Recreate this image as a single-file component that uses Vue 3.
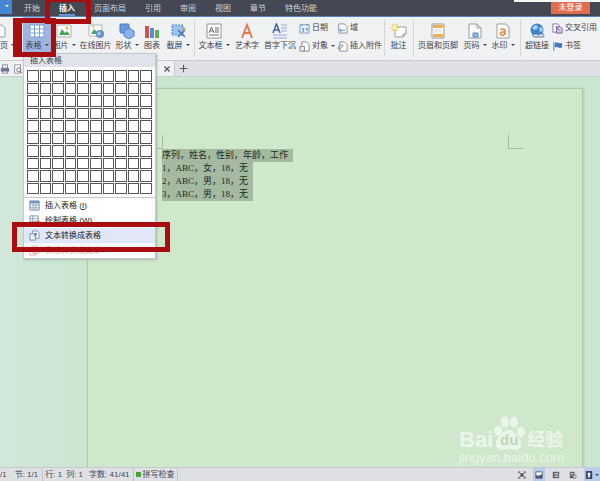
<script setup>
const tabs = ['开始', '插入', '页面布局', '引用', '审阅', '视图', '章节', '特色功能']
const lines = ['序列，姓名，性别，年龄，工作', '1，ABC，女，18，无', '2，ABC，男，18，无', '3，ABC，男，18，无']
</script>

<template>
  <div class="app">
    <header class="titlebar">
      <button class="appmenu" aria-label="菜单"><i class="caret"></i></button>
      <nav class="tabs">
        <button v-for="t in tabs" :key="t" :class="{ active: t === '插入' }">{{ t }}</button>
      </nav>
      <div class="account"><button class="login">未登录</button></div>
    </header>

    <div class="ribbon">
      <button class="tool cut">
        <svg viewBox="0 0 16 16"><path d="M-4 2H2l3 3v9H-4z" fill="#fff" stroke="#9a9da3" /></svg>
        <span>页<i class="caret"></i></span>
      </button>
      <button class="tool selected">
        <svg viewBox="0 0 16 16"><path d="M1 2h14v12H1z" fill="#fff" stroke="#7f9fd4" /><path d="M1 6h14M1 10h14M5.500 2v12M10.500 2v12" stroke="#7f9fd4" fill="none" /></svg>
        <span>表格<i class="caret"></i></span>
      </button>
      <button class="tool">
        <svg viewBox="0 0 16 16"><path d="M1 2h14v12H1z" fill="#fff" stroke="#aeb1b5" /><path d="M3 12l3-6 3 4 2-2 3 4z" fill="#4ba454" /><circle cx="11" cy="5" r="1.500" fill="#eab054" /></svg>
        <span>图片<i class="caret"></i></span>
      </button>
      <button class="tool">
        <svg viewBox="0 0 16 16"><path d="M1 2h13v11H1z" fill="#fff" stroke="#aeb1b5" /><path d="M3 11l3-5 3 3 2-1v3z" fill="#4ba454" /><circle cx="5" cy="4" r="1" fill="#eab054" /><circle cx="12" cy="11" r="4" fill="#5e91ca" /><path d="M9 10l3-2 1 3-2 2" fill="#a5cbe7" /></svg>
        <span>在线图片</span>
      </button>
      <button class="tool">
        <svg viewBox="0 0 16 16"><rect x="1" y="1" width="9" height="9" rx="1" fill="#6d9bdd" stroke="#4579bd" /><path d="M10 5l5 3v5l-5 3-5-3V8z" fill="#8ab2ec" stroke="#4d82ca" /></svg>
        <span>形状<i class="caret"></i></span>
      </button>
      <button class="tool">
        <svg viewBox="0 0 16 16"><path d="M1 3h4v12H1z" fill="#d4524c" /><path d="M6 5h4v10H6z" fill="#5b8bd3" /><path d="M11 7h4v8h-4z" fill="#62ad5a" /></svg>
        <span>图表</span>
      </button>
      <button class="tool">
        <svg viewBox="0 0 16 16"><path d="M2 2h11v10H2z" fill="#9dc3ed" stroke="#4f84c4" stroke-dasharray="2 1" /><path d="M8 7l7 7M15 7l-7 7" stroke="#4374b5" stroke-width="1.500" /><circle cx="14" cy="6" r="1.500" fill="#e0a054" /></svg>
        <span>截屏<i class="caret"></i></span>
      </button>
      <i class="rule"></i>
      <button class="tool">
        <svg viewBox="0 0 16 16"><path d="M1 1h14v14H1z" fill="#fff" stroke="#8f9297" /><path d="M3 10l2.500-6L8 10M4 8h3M9 5h4M9 7h4M9 9h4M3 12h10" fill="none" stroke="#666a70" /></svg>
        <span>文本框<i class="caret"></i></span>
      </button>
      <button class="tool">
        <svg viewBox="0 0 16 16"><path d="M3 15L8 2l5 13M5 10h6" fill="none" stroke="#e07b50" stroke-width="2" /></svg>
        <span>艺术字</span>
      </button>
      <button class="tool">
        <svg viewBox="0 0 16 16"><path d="M1 10l3.500-9L8 10M2 7h5" fill="none" stroke="#3f62a4" stroke-width="1.500" /><path d="M9 2h6M9 5h6M9 8h6M1 12h14M1 15h14" stroke="#8dabd9" /></svg>
        <span>首字下沉</span>
      </button>
      <div class="stack">
        <button>
          <svg viewBox="0 0 12 12"><path d="M1 2h10v9H1z" fill="#eaf2fb" stroke="#7798c4" /><path d="M3 1v2M9 1v2M3 6h2v3H3M7 6h2v3" fill="none" stroke="#5581bc" /></svg>日期
        </button>
        <button>
          <svg viewBox="0 0 12 12"><path d="M3 1h5l3 3v7H3z" fill="#fff" stroke="#83878e" /><path d="M1 6h5v5H1z" fill="#e9edf2" stroke="#83878e" /></svg>对象<i class="caret"></i>
        </button>
      </div>
      <div class="stack">
        <button>
          <svg viewBox="0 0 12 12"><path d="M2 1h6l3 3v7H2z" fill="#fff" stroke="#858c9a" /><path d="M3 8h6M4 6l-1 2 2 2" fill="none" stroke="#5984bd" /></svg>域
        </button>
        <button>
          <svg viewBox="0 0 12 12"><path d="M3 1h5l3 3v7H3z" fill="#fff" stroke="#858c9a" /><path d="M6 6L3 9q-3 0-1-3l3-2q3 0 0 3" fill="none" stroke="#777c84" /></svg>插入附件
        </button>
      </div>
      <i class="rule"></i>
      <button class="tool">
        <svg viewBox="0 0 16 16"><path d="M4 4h11v7l-3 3H4z" fill="#fff" stroke="#9a9da3" /><path d="M15 11h-3v3" fill="none" stroke="#9a9da3" /><path d="M4 0v9M0 4.500h9M1 1l6 7M7 1L1 8" stroke="#e7c438" /><circle cx="4" cy="4.500" r="2" fill="#fff6a4" /></svg>
        <span>批注</span>
      </button>
      <i class="rule"></i>
      <button class="tool">
        <svg viewBox="0 0 16 16"><path d="M2 1h12v14H2z" fill="#fff" stroke="#96999e" /><path d="M3 2h10v3H3zM3 11h10v3H3z" fill="#edae54" /><path d="M4 7h8M4 9h8" stroke="#d3d6da" /></svg>
        <span>页眉和页脚</span>
      </button>
      <button class="tool">
        <svg viewBox="0 0 16 16"><path d="M2 1h8l4 4v10H2z" fill="#fff" stroke="#96999e" /><path d="M10 1v4h4" fill="none" stroke="#96999e" /><path d="M6 10h5v4H6z" fill="#93baf0" stroke="#5986c2" /></svg>
        <span>页码<i class="caret"></i></span>
      </button>
      <button class="tool">
        <svg viewBox="0 0 16 16"><path d="M2 1h9l3 3v11H2z" fill="#fff" stroke="#96999e" /><path d="M5 7q3-2 5 0v5M10 9H7q-3 1-1 3 3 1 4-2" fill="none" stroke="#e38a45" stroke-width="1.500" /></svg>
        <span>水印<i class="caret"></i></span>
      </button>
      <i class="rule"></i>
      <button class="tool">
        <svg viewBox="0 0 16 16"><circle cx="8" cy="7" r="6.500" fill="#3e83cd" /><path d="M3 5l3-3 3 1-1 3-3 1zM10 5l3-1 1 4-3 1z" fill="#a8d2ef" /><rect x="4" y="11" width="6" height="3" rx="1.500" fill="#e7edf4" stroke="#506f96" /><rect x="9" y="11" width="6" height="3" rx="1.500" fill="#e7edf4" stroke="#506f96" /></svg>
        <span>超链接</span>
      </button>
      <div class="stack">
        <button>
          <svg viewBox="0 0 12 12"><path d="M1 1h5l2 2v7H1z" fill="#fff" stroke="#786d9b" /><path d="M5 4h4l2 2v5H5z" fill="#d5c9ea" stroke="#77569e" /><path d="M4 4l4 4" stroke="#654b8d" /></svg>交叉引用
        </button>
        <button>
          <svg viewBox="0 0 12 12"><path d="M2 1v10" stroke="#54779f" /><path d="M3 2q3-1 4 0 2 1 4 0v5q-3 1-4 0-2-1-4 0z" fill="#4677cc" /></svg>书签
        </button>
      </div>
    </div>

    <div class="docbar">
      <div class="doctab">
        <button aria-label="打印"><svg viewBox="0 0 12 12"><path d="M3 1h6v4H3zM3 8h6v3H3z" fill="#fff" stroke="#66758c" /><path d="M1 5h10v4H1z" fill="#66758c" /></svg></button>
        <button aria-label="打印预览"><svg viewBox="0 0 12 12"><path d="M2 1h7v10H2z" fill="#fff" stroke="#80838a" /><circle cx="7" cy="7" r="2.500" fill="#eef" stroke="#60666f" /><path d="M9 9l2 2" stroke="#60666f" /></svg></button>
        <button class="close" aria-label="关闭"><svg viewBox="0 0 12 12"><path d="M3 3l6 6M9 3l-6 6" stroke="#555961" stroke-width="1.500" /></svg></button>
      </div>
      <button class="add" aria-label="新建"><svg viewBox="0 0 12 12"><path d="M6 1v10M1 6h10" stroke="#555b65" stroke-width="1.500" /></svg></button>
    </div>

    <main class="workspace">
      <article class="page">
        <div class="corners"><i class="corner left"></i><i class="corner right"></i></div>
        <div class="text"><p v-for="l in lines" :key="l"><mark>{{ l }}</mark></p></div>
        <div class="brand">
          <div class="brandrow">
            <b>Bai</b>
            <span class="paw">
              <svg viewBox="0 0 32 36"><g fill="currentColor"><ellipse cx="5" cy="15" rx="4" ry="5" /><ellipse cx="12" cy="6" rx="4" ry="5.500" /><ellipse cx="21" cy="6" rx="4" ry="5.500" /><ellipse cx="28" cy="16" rx="4" ry="5" /><path d="M16 14c5 0 6 5 10 8 4 4 3 12-4 12-3 0-4-1-6-1s-4 1-7 1c-6 0-8-7-4-12 4-4 6-8 11-8z" /></g></svg>
              <em>du</em>
            </span>
            <b class="cn">经验</b>
          </div>
          <div class="site">jingyan.baidu.com</div>
        </div>
      </article>
    </main>

    <footer class="status">
      <span class="pageno">/1</span><span class="section">节: 1/1</span><i></i>
      <span class="row">行: 1</span><span class="col">列: 1</span><span class="words">字数: 41/41</span><i></i>
      <button class="spell"><b></b>拼写检查</button><i></i>
      <div class="views">
        <button aria-label="全屏显示"><svg viewBox="0 0 10 10"><path d="M3 3h4v4H3z" fill="#555a62" /><path d="M1 3V1h2M7 1h2v2M9 7v2H7M3 9H1V7M1 1l8 8M9 1L1 9" fill="none" stroke="#555a62" /></svg></button>
        <button class="on" aria-label="页面视图"><svg viewBox="0 0 10 10"><path d="M1 1h8v8H1z" fill="#f5f7fa" stroke="#4d5a70" /><path d="M1 5l3 1 5-2v5H1z" fill="#4d5a70" /></svg></button>
        <button aria-label="大纲"><svg viewBox="0 0 10 10"><path d="M1 1h8v8H1z" fill="#5a5d63" /><path d="M3 3h5M3 5h5M3 7h5" stroke="#e5e7eb" /></svg></button>
        <button aria-label="网页版式"><svg viewBox="0 0 10 10"><path d="M1 1h6v8H1z" fill="#5a5d63" /><path d="M2 3h4M2 5h3" stroke="#e5e7eb" /><circle cx="7" cy="7" r="2" fill="#eee" stroke="#5a5d63" /></svg></button>
        <button class="on last" aria-label="护眼模式"><svg viewBox="0 0 10 10"><path d="M1 0h8v10H1z" fill="#414b5c" /><path d="M5 2q3 1 1 4v2H4V6Q2 3 5 2z" fill="#fff" /></svg><i class="caret"></i></button>
      </div>
    </footer>

    <section class="menu">
      <h2>插入表格</h2>
      <div class="cells"><i v-for="n in 100" :key="n"></i></div>
      <button>
        <svg viewBox="0 0 12 12"><path d="M1 1h10v10H1z" fill="#fff" stroke="#6b84ad" /><path d="M1 2.500h10" stroke="#5c7eb6" stroke-width="2" /><path d="M1 5.500h10M1 8.500h10M4.500 1v10M7.500 1v10" stroke="#8ba0c2" /></svg>插入表格&nbsp;(<u>I</u>)
      </button>
      <button>
        <svg viewBox="0 0 12 12"><path d="M1 1h9v10H1z" fill="#fff" stroke="#7b90b3" /><path d="M1 4h9M1 7h9M4 1v10" stroke="#8ba0c2" /><path d="M5 10l5-5 2 2-5 4z" fill="#e48242" /></svg>绘制表格&nbsp;(<u>W</u>)
      </button>
      <button class="current">
        <svg viewBox="0 0 12 12"><path d="M4 1h5l2 2v6H4z" fill="#fff" stroke="#7888a8" /><path d="M1 4h6v7H1z" fill="#eef2fc" stroke="#7888a8" /><path d="M5 7l3-3M6 4h2v2" fill="none" stroke="#4b6da6" /></svg>文本转换成表格
      </button>
      <button class="disabled" disabled>
        <svg viewBox="0 0 12 12"><path d="M4 1h5l2 2v6H4zM1 4h6v7H1z" fill="#fff" stroke="#e5a7a7" /></svg>表格转换成文本
      </button>
    </section>

    <i class="frame frame-tab"></i>
    <i class="frame frame-table"></i>
    <i class="frame frame-convert"></i>
  </div>
</template>

<style>
body { margin: 0; }
</style>

<style scoped>
* { box-sizing: border-box; }
.app {
  position: relative;
  display: grid;
  grid-template-rows: 17px 44px 16px 1fr 14px;
  min-height: 100vh;
  overflow: hidden;
  font: 8px/10px "Liberation Sans", "Noto Sans CJK SC", sans-serif;
  color: #3f4247;
}
button { margin: 0; padding: 0; border: 0; background: none; font: inherit; color: inherit; white-space: nowrap; }
svg { display: block; flex: none; }
.caret { display: inline-block; border: 2px solid transparent; border-top-color: currentColor; border-bottom: 0; margin-left: 3px; vertical-align: 2px; }

.titlebar { display: flex; background: #434853; border-bottom: 1px solid #5683b8; color: #d0d3d9; }
.appmenu { width: 12px; height: 14px; background: #4486d2; color: #fff; }
.appmenu .caret { margin-left: 2px; }
.tabs { display: flex; flex: 1; gap: 19px; padding-left: 12px; }
.tabs button { height: 16px; padding-top: 1px; }
.tabs .active { color: #fff; font-weight: bold; border-bottom: 2px solid #6795cc; padding-top: 3px; }
.account { width: 86px; height: 3px; border-top: 2px solid #f4f6f8; padding-left: 37px; }
.login { display: block; width: 39px; height: 12px; background: #e16c50; color: #fff; }

.ribbon {
  display: grid;
  grid-template-columns: 23px 28px 26px 37px 26px 24px 28px 4px 36px 30px 36px 38px 46px 4px 25px 4px 46px 28px 28px 6px 28px 1fr;
  background: #f0f1f3;
  border-bottom: 1px solid #c9cbd0;
}
.tool { display: flex; flex-direction: column; align-items: center; gap: 2px; padding-top: 6px; }
.tool svg { width: 16px; height: 16px; }
.tool.cut { align-items: flex-start; }
.selected { height: 38px; background: #9fb5df; }
.rule { height: 37px; margin-top: 3px; justify-self: center; border-left: 1px solid #d3d5d9; }
.stack { display: flex; flex-direction: column; gap: 8px; padding: 6px 0 0 1px; }
.stack button { display: flex; align-items: center; gap: 2px; height: 10px; }
.stack svg { width: 11px; height: 11px; }
.stack .caret { margin-left: 1px; }

.docbar { display: flex; background: #dfe0e5; border-bottom: 1px solid #c5d3cb; }
.doctab { display: flex; align-items: center; gap: 3px; width: 175px; background: #f0f1f4; border-right: 1px solid #c9cbd0; }
.doctab svg { width: 10px; height: 10px; }
.doctab .close { margin: 0 2px 0 auto; }
.add { padding: 0 4px; }
.add svg { width: 9px; height: 9px; }

.workspace { display: flex; padding: 11px 17px 0 87px; background: linear-gradient(90deg, #d1e7d9, #cbe6d0 16%, #c9e6d1); }
.page { display: flex; flex: 1; flex-direction: column; background: #cfe8cb; border: 1px solid #afc8b1; border-bottom: 0; box-shadow: 1px 0 2px #b5cdb8; }
.corners { display: flex; justify-content: space-between; padding: 46px 59px 0 60px; }
.corner { width: 15px; height: 14px; border-bottom: 1px solid #a5bca3; }
.left { border-right: 1px solid #a5bca3; }
.right { border-left: 1px solid #a5bca3; }
.text { padding-left: 74px; font: 9px/13px "Liberation Serif", "Noto Sans CJK SC", serif; color: #222c22; }
.text p { margin: 0; height: 13px; display: flex; }
.text mark { background: #a3b9a0; color: inherit; padding-right: 5px; }
.brand { margin: auto 16px 2px auto; width: 107px; color: #ebf6ea; font-family: "Liberation Sans", "Noto Sans CJK SC", sans-serif; }
.brandrow { display: flex; align-items: flex-end; height: 35px; font-size: 22px; line-height: 22px; }
.brandrow .cn { font-size: 18px; font-weight: bold; margin-left: 2px; }
.paw { position: relative; width: 32px; height: 35px; }
.paw svg { width: 32px; height: 36px; }
.paw em { position: absolute; inset: 16px 0 0; text-align: center; font-size: 15px; line-height: 16px; font-style: normal; font-weight: bold; color: #b9d8b6; }
.site { font-size: 13px; line-height: 14px; }

.status { display: flex; align-items: center; background: #dfe0e4; border-top: 1px solid #c6c9cd; color: #44474c; }
.status > i { height: 12px; border-left: 1px solid #bfc1c6; }
.section { margin: 0 4px 0 8px; }
.row { margin-left: 2px; }
.col { margin-left: 4px; }
.words { margin: 0 3px 0 6px; }
.spell { display: flex; align-items: center; gap: 2px; padding: 0 2px; }
.spell b { width: 5px; height: 5px; background: #4aa23c; }
.views { display: flex; align-self: stretch; gap: 5px; margin-left: auto; }
.views button { display: flex; align-items: center; justify-content: center; width: 12px; }
.views svg { width: 8px; height: 8px; }
.views .on { background: #b7cbed; }
.views .last { width: 16px; }
.views .caret { margin-left: 2px; }

.menu { position: absolute; left: 23px; top: 53px; width: 133px; background: #fff; border: 1px solid #c2c8cc; box-shadow: 1px 1px 2px #a6bba9; }
.menu h2 { margin: 0; height: 13px; padding-left: 6px; background: #dfe3eb; font: inherit; line-height: 14px; }
.cells { display: grid; grid-template: repeat(10, 1fr) / repeat(10, 1fr); gap: 1px; height: 131px; padding: 3px 3px 3px; border-bottom: 1px solid #c5c8cc; }
.cells i { border: 1px solid #56565a; }
.menu button { display: flex; align-items: center; width: 100%; height: 15px; padding-left: 5px; color: #222; }
.menu svg { width: 11px; height: 11px; margin-right: 5px; }
.menu .current { background: #e2e7f8; }
.menu .disabled { color: #e5a5a5; }

.frame { position: absolute; border: 5px solid #a90d10; pointer-events: none; }
.frame-tab { left: 45px; top: -3px; width: 46px; height: 27px; }
.frame-table { left: 13px; top: 18px; width: 43px; height: 39px; border-left-width: 9px; }
.frame-convert { left: 12px; top: 222px; width: 158px; height: 30px; }
</style>
